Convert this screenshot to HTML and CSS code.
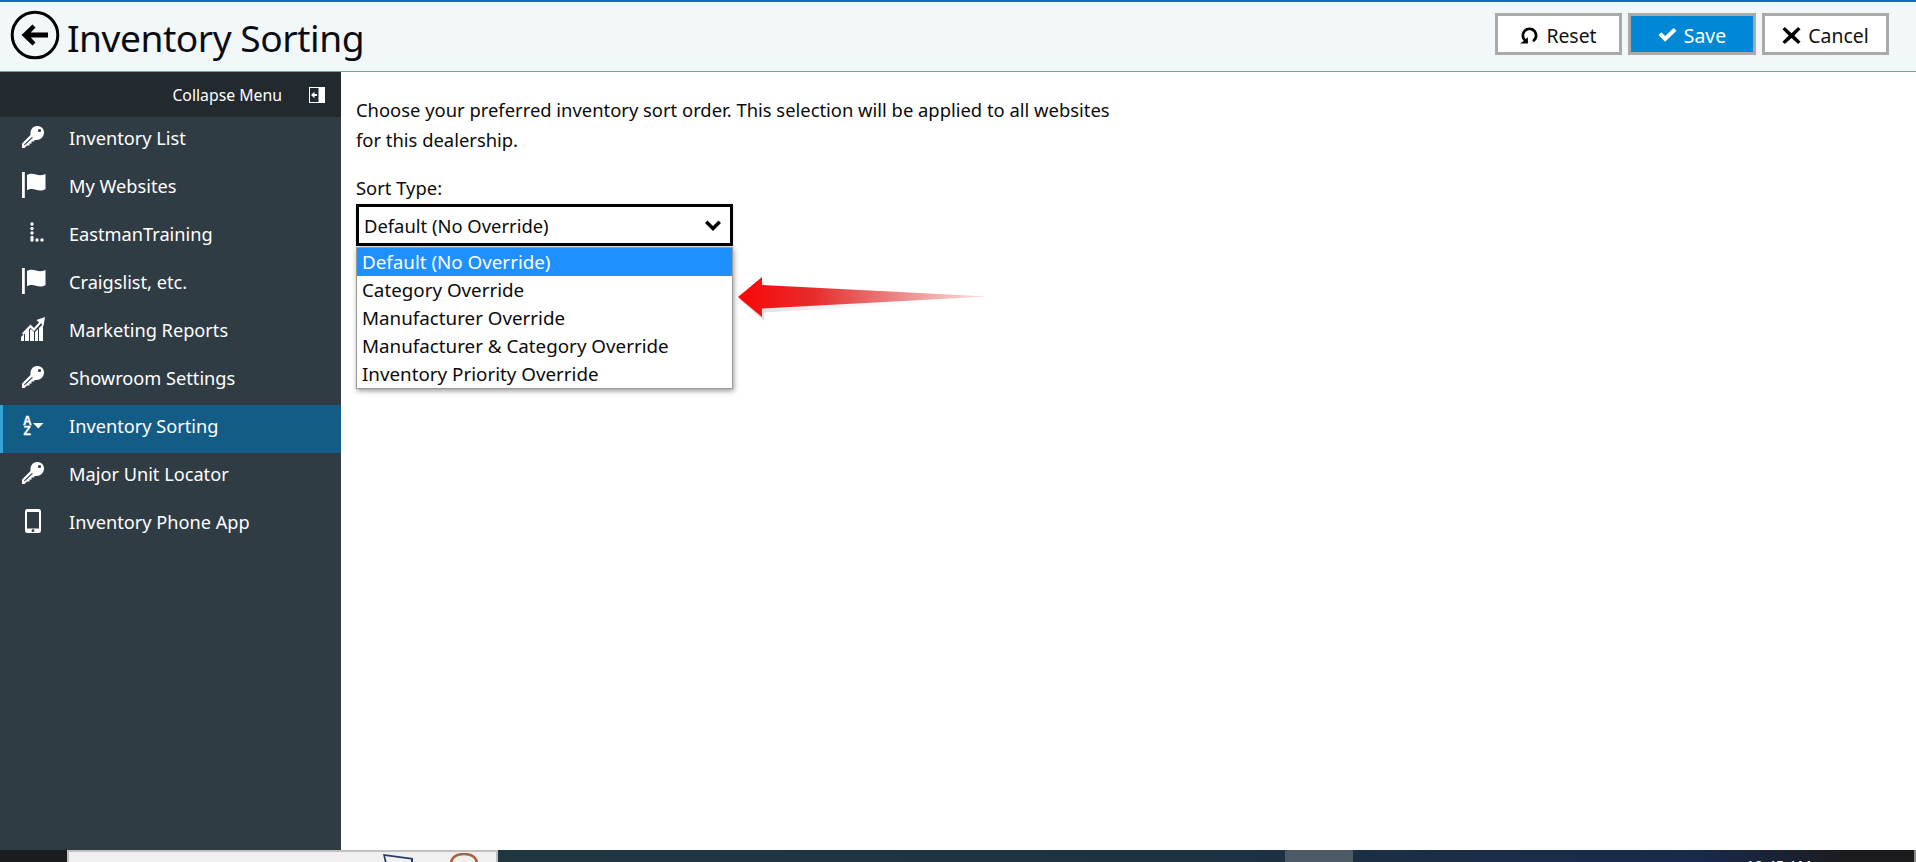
FILE: index.html
```html
<!DOCTYPE html>
<html lang="en">
<head>
<meta charset="utf-8">
<title>Inventory Sorting</title>
<link rel="stylesheet" href="styles.css">
</head>
<body>
<svg class="defs" width="0" height="0" aria-hidden="true">
  <symbol id="i-key" viewBox="0 0 24 24">
    <path fill-rule="evenodd" d="M16 1C20 1 23 3.500 23 7.500C23 12 19.500 15 15.500 15L14 15L12.500 16.500L10.500 16.500L10.500 18.500L8.500 18.500L8.500 20.500L6 20.500L3.500 23L1 23L1 18.500L9.500 10C9 5 11.500 1 16 1ZM18.500 3.900a1.600 1.600 0 1 0 0 3.200 1.600 1.600 0 0 0 0-3.200ZM3 19.500L11 12L11.800 12.700L3.800 20.300Z"/>
  </symbol>
  <symbol id="i-flag" viewBox="0 0 24 26">
    <rect x="0" y="0" width="2.800" height="26"/>
    <path d="M5 3c2.500-1.700 6-1.700 9-.5 3 1.200 6 1 9.500-.5v15c-3 2-6.500 2-9.500.8-3-1.200-6.500-1.200-9 .5z"/>
  </symbol>
  <symbol id="i-dots" viewBox="0 0 14 20">
    <circle cx="2" cy="2" r="1.700"/><circle cx="2" cy="6.500" r="1.700"/><circle cx="2" cy="11" r="1.700"/><circle cx="2" cy="15.500" r="1.700"/><circle cx="2" cy="18" r="1.700"/><circle cx="7" cy="18" r="1.700"/><circle cx="12" cy="18" r="1.700"/>
  </symbol>
  <symbol id="i-chart" viewBox="0 0 24 24">
    <path d="M24 0l-1.500 9-2.500-2.800-7 8-3.500-3.500-7 7.300L1 16.200l8.500-8.700 3.500 3.500 5-5.600L15.500 3z"/>
    <path d="M0 24v-4l3-3v7zM4 24v-8l4-4v12zM9 24V13l1-1 3 3v9zM14 24v-9l3-3v12zM18 24V11l4-4v17z"/>
  </symbol>
  <symbol id="i-phone" viewBox="0 0 16 24">
    <path fill-rule="evenodd" d="M2.500 0h11A2.500 2.500 0 0 1 16 2.500v19a2.500 2.500 0 0 1-2.500 2.500h-11A2.500 2.500 0 0 1 0 21.500v-19A2.500 2.500 0 0 1 2.500 0zM2 3v16.500h12V3zM8 20.300a1.400 1.400 0 1 0 0 2.800 1.400 1.400 0 0 0 0-2.800z"/>
  </symbol>
</svg>

<div class="topline"></div>
<header class="topbar">
  <div class="title-group">
    <svg class="back-icon" viewBox="0 0 50 50" aria-hidden="true">
      <circle cx="25" cy="25" r="22.800" fill="none" stroke="#000" stroke-width="3"/>
      <path d="M11.500 25L22.500 14.500l3 3-4.800 5H38v5H20.700l4.800 5-3 3z"/>
    </svg>
    <h1 class="title">Inventory Sorting</h1>
  </div>
  <div class="actions">
    <button class="btn" type="button">
      <svg class="btn-icon" viewBox="0 0 20 20" aria-hidden="true"><path d="M3.800 18.500H0l1.200-.9L4 15.700C2.500 14.300 1.600 12.300 1.600 10 1.600 5.200 5.300 1.500 10 1.500s8.400 3.700 8.400 8.500c0 3.100-1.600 5.800-4 7.200l-1.600-2.500c1.600-1 2.700-2.700 2.700-4.700 0-3.100-2.400-5.500-5.500-5.500S4.500 6.900 4.500 10c0 1.400.5 2.700 1.400 3.600l2.400-1.800v6.700z"/></svg>
      Reset
    </button>
    <button class="btn btn-primary" type="button">
      <svg class="btn-icon" viewBox="0 0 20 20" aria-hidden="true"><path d="M0.500 9.500l3-3 4 4L16.500 2l3 3L7.500 16.500z" fill="#fff"/></svg>
      Save
    </button>
    <button class="btn" type="button">
      <svg class="btn-icon" viewBox="0 0 20 20" aria-hidden="true"><path d="M3 1l7 6.500L17 1l2.500 2.500L13 10l6.500 6.500L17 19l-7-6.500L3 19 .5 16.500 7 10 .5 3.500z"/></svg>
      Cancel
    </button>
  </div>
</header>

<div class="main">
  <nav class="sidebar">
    <div class="collapse-row">
      <span>Collapse Menu</span>
      <svg class="collapse-icon" viewBox="0 0 16 16" aria-hidden="true">
        <rect width="16" height="16" fill="#fff"/><rect x="1" y="1" width="8.500" height="14" fill="#22292f"/>
        <path d="M2 8l3.500-3.200V7H8v2H5.500v2.200z" fill="#fff"/>
      </svg>
    </div>
    <a class="nav-item"><span class="nav-slot"><svg class="ic ic-key"><use href="#i-key"/></svg></span>Inventory List</a>
    <a class="nav-item"><span class="nav-slot"><svg class="ic ic-flag"><use href="#i-flag"/></svg></span>My Websites</a>
    <a class="nav-item"><span class="nav-slot"><svg class="ic ic-dots"><use href="#i-dots"/></svg></span>EastmanTraining</a>
    <a class="nav-item"><span class="nav-slot"><svg class="ic ic-flag"><use href="#i-flag"/></svg></span>Craigslist, etc.</a>
    <a class="nav-item"><span class="nav-slot"><svg class="ic ic-chart"><use href="#i-chart"/></svg></span>Marketing Reports</a>
    <a class="nav-item"><span class="nav-slot"><svg class="ic ic-key"><use href="#i-key"/></svg></span>Showroom Settings</a>
    <a class="nav-item active"><span class="nav-slot">
      <svg class="ic ic-sort" viewBox="0 0 22 20" aria-hidden="true">
        <text x="1" y="9.500" class="sort-letter">A</text><text x="1.500" y="19.500" class="sort-letter">Z</text>
        <path d="M11 8h10.500l-5.250 5.500z"/>
      </svg></span>Inventory Sorting</a>
    <a class="nav-item"><span class="nav-slot"><svg class="ic ic-key"><use href="#i-key"/></svg></span>Major Unit Locator</a>
    <a class="nav-item"><span class="nav-slot"><svg class="ic ic-phone"><use href="#i-phone"/></svg></span>Inventory Phone App</a>
  </nav>

  <main class="content">
    <p class="intro">Choose your preferred inventory sort order. This selection will be applied to all websites for this dealership.</p>
    <label class="field-label">Sort Type:</label>
    <div class="select-wrap">
      <div class="select-box">
        <span>Default (No Override)</span>
        <svg class="chev" viewBox="0 0 16 11" aria-hidden="true"><path d="M0 3l2.500-2.500L8 6l5.500-5.500L16 3 8 11z"/></svg>
      </div>
      <ul class="dropdown">
        <li class="selected">Default (No Override)</li>
        <li>Category Override</li>
        <li>Manufacturer Override</li>
        <li>Manufacturer &amp; Category Override</li>
        <li>Inventory Priority Override</li>
      </ul>
      <svg class="red-arrow" viewBox="0 0 252 44" aria-hidden="true">
        <defs>
          <linearGradient id="arrow-fade" x1="0" x2="1" y1="0" y2="0">
            <stop offset="0" stop-color="#fb0606"/>
            <stop offset=".3" stop-color="#e62c2c"/>
            <stop offset=".7" stop-color="#ee9696" />
            <stop offset="1" stop-color="#fbe6e6"/>
          </linearGradient>
          <linearGradient id="arrow-shadow" x1="0" x2="1" y1="0" y2="0">
            <stop offset="0" stop-color="#000" stop-opacity=".14"/>
            <stop offset=".5" stop-color="#000" stop-opacity=".02"/>
            <stop offset="1" stop-color="#000" stop-opacity="0"/>
          </linearGradient>
        </defs>
        <path d="M1 22L25 3v8.500L251 21 25 34.500V43z" fill="url(#arrow-shadow)" transform="translate(1 1)"/>
        <path d="M0 20L24 0v8L250 19.500 24 31.500V40z" fill="url(#arrow-fade)"/>
      </svg>
    </div>
  </main>
</div>

<footer class="taskbar">
  <div class="task-start"></div>
  <div class="task-window">
    <svg class="task-flag" viewBox="0 0 30 10" aria-hidden="true"><path d="M0 1l30 4v5H2z" fill="#2a3a60"/><path d="M2 3l26 3.500V10H4z" fill="#f0f0f0"/></svg>
    <svg class="task-bag" viewBox="0 0 30 10" aria-hidden="true"><path d="M2 10C3 3 9 1 15 1s12 2 13 9" fill="none" stroke="#a9653a" stroke-width="2.500"/></svg>
  </div>
  <div class="task-rest">
    <div class="task-active"></div>
    <div class="task-clock">10:45 AM</div>
    <div class="task-edge"></div>
  </div>
</footer>
</body>
</html>
```
FILE: styles.css
```css
* { box-sizing: border-box; }
html, body { height: 100%; }
body {
  margin: 0;
  height: 862px;
  display: flex;
  flex-direction: column;
  overflow: hidden;
  background: #fff;
  color: #0b0b0b;
  font-family: "Noto Sans", "Open Sans", sans-serif;
  font-size: 18.400px;
}
.defs { display: block; height: 0; }

.topline { height: 2px; background: #0473b5; flex: none; }
.topbar {
  flex: none;
  height: 70px;
  display: flex;
  justify-content: space-between;
  align-items: flex-start;
  padding: 0 27px 0 10px;
  background: #f2f7fa;
  border-bottom: 1px solid #5ba3d0;
}
.title-group { display: flex; align-items: center; height: 66px; }
.back-icon { width: 50px; height: 50px; margin-right: 7px; }
.title {
  margin: 0;
  padding-top: 4px;
  font-size: 37.200px;
  font-weight: 400;
  color: #0b0b12;
  letter-spacing: -.5px;
}
.actions { display: flex; gap: 6px; padding-top: 11px; }
.btn {
  width: 127px;
  height: 42px;
  display: flex;
  align-items: center;
  justify-content: center;
  gap: 7px;
  border: 3px solid #aaa;
  background: #fff;
  color: #111;
  font: inherit;
  font-size: 19.400px;
  padding: 2px 0 0;
}
.btn-primary { width: 128px; background: #0088d6; color: #fff; }
.btn-icon { width: 19px; height: 19px; }

.main { flex: 1; display: flex; min-height: 0; }
.sidebar { width: 341px; flex: none; background: #303c44; color: #fff; }
.collapse-row {
  height: 45px;
  background: #22292f;
  display: flex;
  align-items: center;
  justify-content: flex-end;
  gap: 27px;
  padding-right: 16px;
  font-size: 15.800px;
}
.collapse-icon { width: 16px; height: 16px; }
.nav-item {
  height: 48px;
  padding-bottom: 7px;
  display: flex;
  align-items: center;
  font-size: 18.200px;
  color: #fff;
}
.nav-item.active { background: #135c85; box-shadow: inset 3px 0 0 #35a3d8; }
.nav-slot {
  width: 69px;
  padding-left: 21px;
  display: flex;
  align-items: center;
  flex: none;
}
.ic { fill: #fff; display: block; margin-top: -1px; overflow: visible; }
.ic-key { width: 24px; height: 24px; }
.ic-flag { width: 24px; height: 26px; margin-left: 1px; }
.ic-dots { width: 14px; height: 20px; margin-left: 9px; margin-top: -3px; }
.ic-chart { width: 24px; height: 24px; }
.ic-sort { width: 22px; height: 20px; margin-left: 1px; }
.ic-phone { width: 16px; height: 24px; margin-left: 4px; }
.sort-letter { font-family: "Liberation Sans", sans-serif; font-weight: 700; font-size: 12px; fill: #fff; stroke: #fff; stroke-width: .3px; }

.content { flex: 1; padding: 23px 15px 0; }
.intro { margin: 0; width: 770px; line-height: 30px; }
.field-label { display: block; margin-top: 19px; line-height: 28px; }
.select-wrap { position: relative; width: 377px; margin-top: 2px; }
.select-box {
  height: 42px;
  border: 3px solid #000;
  background: #fff;
  display: flex;
  align-items: center;
  justify-content: space-between;
  padding: 0 9px 0 5px;
  box-shadow: 0 1px 3px rgba(0,0,0,.15);
}
.chev { width: 16px; height: 11px; }
.dropdown {
  position: absolute;
  top: 43px;
  left: 0;
  width: 377px;
  margin: 0;
  padding: 0;
  list-style: none;
  background: #fff;
  border: 1px solid #9a9a9a;
  box-shadow: 1px 2px 5px rgba(0,0,0,.4);
  font-size: 18.800px;
}
.dropdown li { height: 28px; line-height: 29px; padding-left: 5px; }
.dropdown li.selected { background: #1e90ff; color: #fff; }
.red-arrow { position: absolute; left: 382px; top: 73px; width: 252px; height: 44px; }

.taskbar { flex: none; height: 12px; display: flex; overflow: hidden; }
.task-start { width: 68px; background: #1a1c1e; }
.task-window {
  width: 432px;
  background: #f0f0f0;
  border: 2px solid #c0c0c0;
  border-bottom: 0;
  display: flex;
  align-items: flex-start;
  padding: 1px 0 0 314px;
  gap: 36px;
}
.task-flag { width: 30px; height: 10px; flex: none; }
.task-bag { width: 30px; height: 10px; flex: none; }
.task-rest {
  flex: 1;
  display: flex;
  background: linear-gradient(90deg, #213740 0%, #1d3340 45%, #18294a 85%, #1c1c1e 95%);
  color: #fff;
}
.task-active { width: 68px; margin-left: 787px; background: #4c5a66; }
.task-clock { margin-left: 393px; width: 80px; font-size: 15px; line-height: 20px; padding-top: 5px; white-space: nowrap; }
.task-edge { width: 2px; margin-left: 88px; background: #8a8a8a; }
```
